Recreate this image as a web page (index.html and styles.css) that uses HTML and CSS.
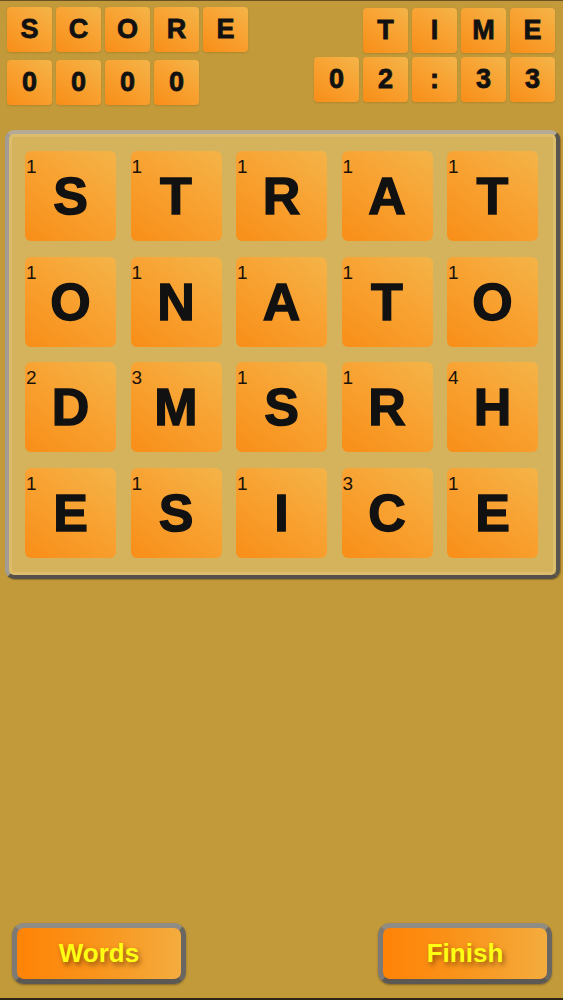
FILE: index.html
```html
<!DOCTYPE html>
<html>
<head>
<meta charset="utf-8">
<link rel="stylesheet" href="styles.css">
</head>
<body>
<div class="screen">
  <header class="header">
    <div class="group group-left">
      <div class="row">
        <div class="htile">S</div><div class="htile">C</div><div class="htile">O</div><div class="htile">R</div><div class="htile">E</div>
      </div>
      <div class="row">
        <div class="htile">0</div><div class="htile">0</div><div class="htile">0</div><div class="htile">0</div>
      </div>
    </div>
    <div class="group group-right">
      <div class="row">
        <div class="htile">T</div><div class="htile">I</div><div class="htile">M</div><div class="htile">E</div>
      </div>
      <div class="row">
        <div class="htile">0</div><div class="htile">2</div><div class="htile">:</div><div class="htile">3</div><div class="htile">3</div>
      </div>
    </div>
  </header>

  <main class="board">
    <div class="tile"><span class="pts">1</span>S</div>
    <div class="tile"><span class="pts">1</span>T</div>
    <div class="tile"><span class="pts">1</span>R</div>
    <div class="tile"><span class="pts">1</span>A</div>
    <div class="tile"><span class="pts">1</span>T</div>

    <div class="tile"><span class="pts">1</span>O</div>
    <div class="tile"><span class="pts">1</span>N</div>
    <div class="tile"><span class="pts">1</span>A</div>
    <div class="tile"><span class="pts">1</span>T</div>
    <div class="tile"><span class="pts">1</span>O</div>

    <div class="tile"><span class="pts">2</span>D</div>
    <div class="tile"><span class="pts">3</span>M</div>
    <div class="tile"><span class="pts">1</span>S</div>
    <div class="tile"><span class="pts">1</span>R</div>
    <div class="tile"><span class="pts">4</span>H</div>

    <div class="tile"><span class="pts">1</span>E</div>
    <div class="tile"><span class="pts">1</span>S</div>
    <div class="tile"><span class="pts">1</span>I</div>
    <div class="tile"><span class="pts">3</span>C</div>
    <div class="tile"><span class="pts">1</span>E</div>
  </main>

  <footer class="footer">
    <button class="btn">Words</button>
    <button class="btn">Finish</button>
  </footer>
</div>
</body>
</html>
```

FILE: styles.css
```css
html, body {
  margin: 0;
  padding: 0;
}

body {
  background: #c29a3a;
  font-family: "Liberation Sans", Arial, sans-serif;
}

.screen {
  height: 1000px;
  box-sizing: border-box;
  display: flex;
  flex-direction: column;
  border-top: 1px solid #6a5022;
  border-bottom: 2px solid #2c2414;
}

.header {
  display: flex;
  justify-content: space-between;
  padding: 6px 8px 0 7px;
}

.group {
  display: flex;
  flex-direction: column;
}

.group-left {
  gap: 8px;
}

.group-right {
  gap: 4px;
  align-items: flex-end;
  padding-top: 1px;
}

.row {
  display: flex;
  gap: 4px;
}

.htile {
  width: 45px;
  height: 45px;
  border-radius: 4px;
  background: linear-gradient(35deg, #f88e18 0%, #f8a232 55%, #f4b448 100%);
  box-shadow: 0 1px 2px rgba(120, 80, 10, 0.25);
  display: flex;
  align-items: center;
  justify-content: center;
  font-weight: bold;
  font-size: 27px;
  line-height: 1;
  color: #111;
  -webkit-text-stroke: 0.8px #111;
}

.board {
  margin: 25px 0 0 5px;
  width: 555px;
  height: 449px;
  box-sizing: border-box;
  border: 4px solid;
  border-color: #b5aa98 #58544e #55504a #a29d94;
  border-radius: 9px;
  background: #d5b25c;
  box-shadow: inset 0 0 0 3px #dcbd6c, 1px 1px 1px rgba(60, 40, 10, 0.35);
  padding: 17px 18px 17px 16px;
  display: grid;
  grid-template-columns: repeat(5, 91px);
  grid-template-rows: repeat(4, 90px);
  column-gap: 14.5px;
  row-gap: 15.67px;
}

.tile {
  position: relative;
  border-radius: 6px;
  background: linear-gradient(35deg, #f88e18 0%, #f8a232 55%, #f4b448 100%);
  display: flex;
  align-items: center;
  justify-content: center;
  font-weight: bold;
  font-size: 52px;
  line-height: 1;
  color: #111;
  -webkit-text-stroke: 1.4px #111;
}

.pts {
  position: absolute;
  left: 1px;
  top: 6px;
  font-weight: normal;
  font-size: 19px;
  line-height: 1;
  color: #1a1208;
  -webkit-text-stroke: 0;
}

.footer {
  margin-top: auto;
  display: flex;
  justify-content: space-between;
  padding: 0 11px 14px 12px;
}

.btn {
  width: 174px;
  height: 61px;
  box-sizing: border-box;
  border: 5px solid;
  border-color: #8f8c86 #6a6763 #5c5955 #7d7a75;
  border-radius: 12px;
  background: linear-gradient(90deg, #ff8306 0%, #f9951c 50%, #f4ac3e 100%);
  box-shadow: 0 1px 2px rgba(40, 30, 10, 0.4);
  font-family: "Liberation Sans", Arial, sans-serif;
  font-weight: bold;
  font-size: 26px;
  color: #ffff14;
  text-shadow: 2px 3px 5px rgba(80, 40, 0, 0.6);
  padding: 0;
  cursor: pointer;
}
```
